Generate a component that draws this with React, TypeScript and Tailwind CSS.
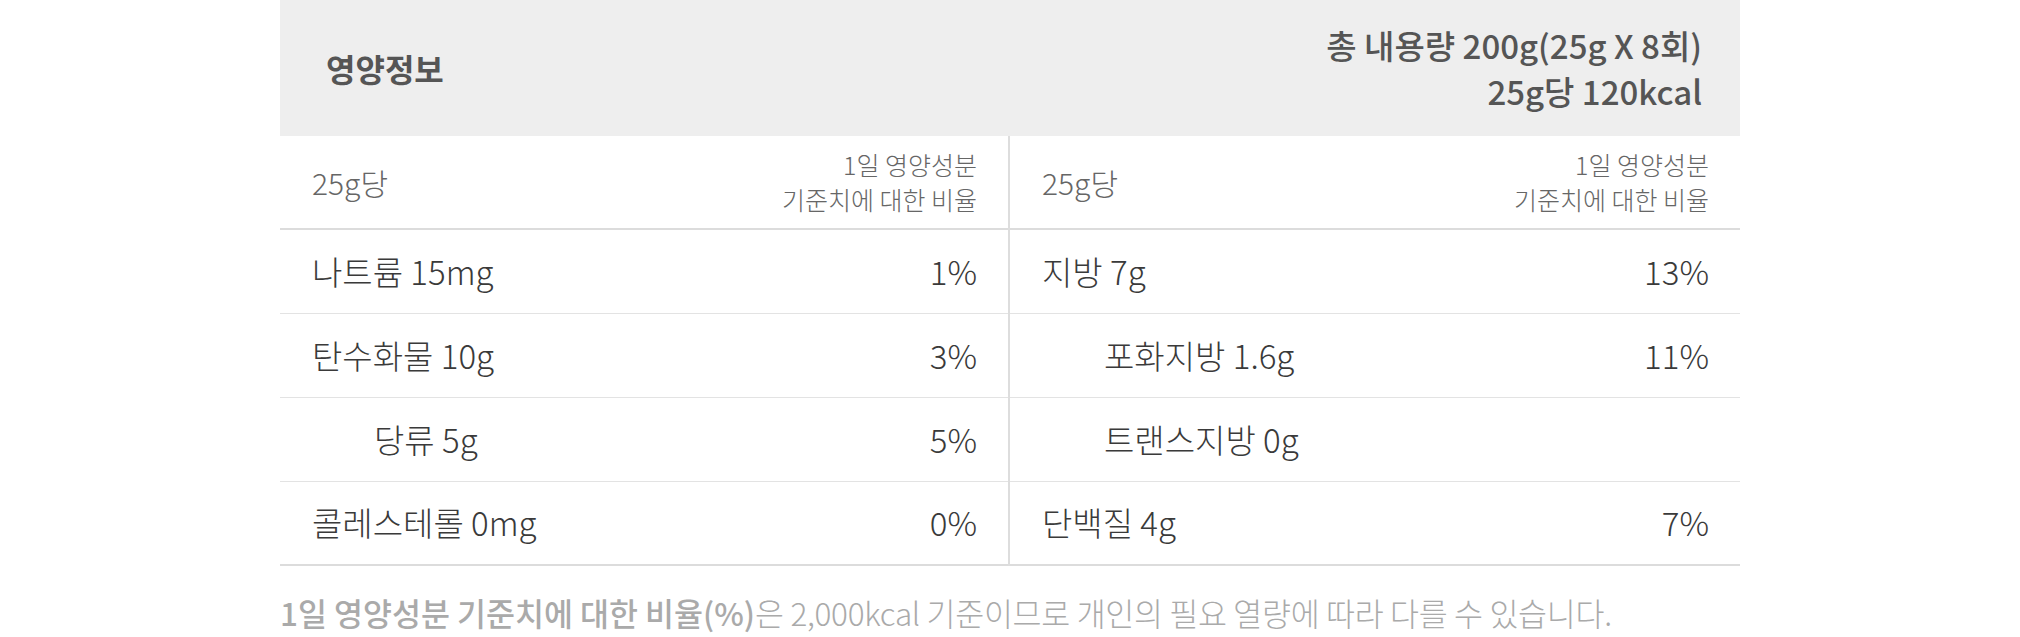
import React from 'react';

type Item = { name: string; value?: string; sub?: boolean };

const left: Item[] = [
  { name: '나트륨 15mg', value: '1%' },
  { name: '탄수화물 10g', value: '3%' },
  { name: '당류 5g', value: '5%', sub: true },
  { name: '콜레스테롤 0mg', value: '0%' },
];

const right: Item[] = [
  { name: '지방 7g', value: '13%' },
  { name: '포화지방 1.6g', value: '11%', sub: true },
  { name: '트랜스지방 0g', sub: true },
  { name: '단백질 4g', value: '7%' },
];

function Column({ items, divider }: { items: Item[]; divider?: boolean }) {
  return (
    <div className={divider ? 'flex flex-col border-r-2 border-[#dddddd]' : 'flex flex-col'}>
      <div className="flex h-[94px] items-center justify-between border-b-2 border-[#dcdcdc] pl-8 pr-[31px] text-[#666666]">
        <span className="text-[30px] font-light">25g당</span>
        <span className="text-right text-[25px] font-light leading-[35px]">
          1일 영양성분
          <br />
          기준치에 대한 비율
        </span>
      </div>
      {items.map((it, i) => (
        <div
          key={it.name}
          className={
            'flex h-[84px] items-center justify-between pr-[31px] text-[33px] font-light text-[#3a3a3a] ' +
            (i === items.length - 1 ? 'border-b-2 border-[#dcdcdc] ' : 'border-b border-[#e3e3e3] ') +
            (it.sub ? 'pl-[94px]' : 'pl-8')
          }
        >
          <span>{it.name}</span>
          <span>{it.value ?? ''}</span>
        </div>
      ))}
    </div>
  );
}

export default function App() {
  return (
    <div
      className="min-h-[637px] w-full bg-white"
      style={{ fontFamily: '"Noto Sans CJK KR", "Noto Sans", sans-serif' }}
    >
      <div className="mx-auto w-[1460px]">
        <div className="flex h-[136px] items-center justify-between bg-[#eeeeee] pl-[46px] pr-[38px]">
          <h2 className="text-[32px] font-bold text-[#555555]">영양정보</h2>
          <div className="text-right text-[33px] font-medium leading-[46px] text-[#555555]">
            <div>총 내용량 200g(25g X 8회)</div>
            <div>25g당 120kcal</div>
          </div>
        </div>

        <div className="grid grid-cols-2">
          <Column items={left} divider />
          <Column items={right} />
        </div>

        <p className="mt-[23px] text-[31.5px] font-light tracking-[-0.3px] text-[#aaaaaa]">
          <span className="font-medium tracking-normal">1일 영양성분 기준치에 대한 비율(%)</span>은 2,000kcal
          기준이므로 개인의 필요 열량에 따라 다를 수 있습니다.
        </p>
      </div>
    </div>
  );
}
